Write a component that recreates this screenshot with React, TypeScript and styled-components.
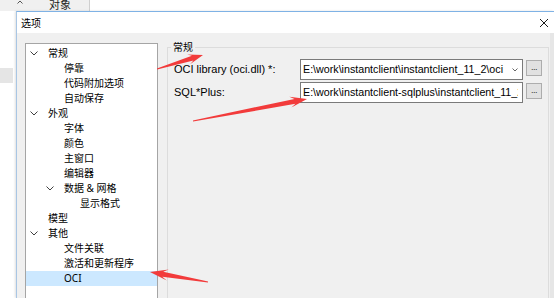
import React from 'react';
import styled, { createGlobalStyle } from 'styled-components';

const LATIN = `"Noto Sans", "Noto Sans CJK SC", sans-serif`;
const UI = `"Liberation Sans", Arial, "Noto Sans CJK SC", sans-serif`;
const CJK = `"Noto Sans CJK SC", "Noto Sans", sans-serif`;

const Global = createGlobalStyle`
  html, body { margin: 0; padding: 0; background: #fff; overflow: hidden; }
  body { font-family: ${LATIN}; color: #000; }
  * { box-sizing: border-box; }
`;

const Page = styled.div`
  position: relative;
  width: 554px;
  height: 298px;
  overflow: hidden;
  display: flex;
  flex-direction: column;
  background: #fff;
`;

const TopStrip = styled.div`
  height: 11px;
  flex: none;
  display: flex;
`;

const Tab = styled.div`
  width: 90px;
  background: #f0f0f0;
  border-right: 1px solid #cfcfcf;
  display: flex;
  align-items: flex-start;
  padding-left: 17px;
  overflow: hidden;
`;

const TabLabel = styled.span`
  font-family: ${CJK};
  font-size: 11px;
  line-height: 12px;
  margin-left: 26px;
  margin-top: -2px;
  color: #222;
`;

const Main = styled.div`
  flex: 1;
  display: flex;
  min-height: 0;
`;

const Gutter = styled.div`
  width: 16px;
  flex: none;
  display: flex;
  flex-direction: column;
`;

const GutterMark = styled.div`
  margin-top: 57px;
  width: 13px;
  height: 15px;
  background: #e5e5e5;
`;

const Dialog = styled.div`
  flex: 1;
  min-width: 0;
  display: flex;
  flex-direction: column;
  border-top: 1px solid #7fb2e5;
  border-left: 1px solid #a9c6e4;
  box-shadow: -1px 0 2px rgba(0, 0, 0, 0.12);
`;

const TitleBar = styled.div`
  height: 21px;
  flex: none;
  background: #fff;
  display: flex;
  align-items: center;
  justify-content: space-between;
  padding: 0 5px 0 4px;
`;

const Title = styled.span`
  font-family: ${CJK};
  font-size: 10px;
  line-height: 12px;
  color: #000;
`;

const Body = styled.div`
  flex: 1;
  min-height: 0;
  display: flex;
  align-items: flex-start;
  gap: 9px;
  padding: 8px 1px 0 8px;
  background: #f0f0f0;
  border-right: 4px solid #e6e6e6;
`;

const Tree = styled.div`
  width: 133px;
  height: 300px;
  flex: none;
  margin-top: 2px;
  padding-top: 2px;
  border: 1px solid #a5a5a5;
  background: #fff;
  display: flex;
  flex-direction: column;
`;

const TreeRow = styled.div<{ $level: number; $selected?: boolean }>`
  height: 15px;
  flex: none;
  display: flex;
  align-items: center;
  padding-left: ${(p) => p.$level * 16}px;
  background: ${(p) => (p.$selected ? '#cce8ff' : 'transparent')};
  font-family: ${LATIN};
  font-size: 10px;
  line-height: 15px;
  color: #000;
  white-space: nowrap;
`;

const Toggle = styled.span`
  width: 16px;
  flex: none;
  display: flex;
  justify-content: center;
  align-items: center;
`;

const TreeLabel = styled.span`
  margin-left: 6px;
`;

const GroupBox = styled.fieldset`
  flex: 1;
  min-width: 0;
  height: 270px;
  margin: 0;
  padding: 6px 6px 0 6px;
  border: 1px solid #dcdcdc;
`;

const Legend = styled.legend`
  font-family: ${CJK};
  font-size: 10px;
  line-height: 12px;
  padding: 0 2px;
  margin-left: -3px;
  color: #000;
`;

const FormGrid = styled.div`
  display: grid;
  grid-template-columns: 126px 1fr auto;
  row-gap: 2px;
  align-items: start;
`;

const Label = styled.span`
  font-family: ${UI};
  font-size: 11px;
  line-height: 21px;
  white-space: nowrap;
  color: #000;
`;

const Field = styled.div`
  height: 21px;
  border: 1px solid #7a7a7a;
  background: #fff;
  display: flex;
  align-items: center;
  padding: 0 4px 0 2px;
  overflow: hidden;
  min-width: 0;
`;

const FieldText = styled.span`
  flex: 1;
  min-width: 0;
  overflow: hidden;
  white-space: nowrap;
  text-overflow: clip;
  font-family: ${UI};
  font-size: 10.7px;
  line-height: 19px;
  color: #000;
`;

const DotsButton = styled.div`
  width: 16px;
  height: 16px;
  margin: 1px 0 0 3px;
  border: 1px solid #adadad;
  background: #e1e1e1;
  display: flex;
  align-items: flex-end;
  justify-content: center;
  font-family: ${UI};
  font-size: 9px;
  line-height: 9px;
  padding-bottom: 3px;
  color: #333;
  letter-spacing: -0.5px;
`;

const Overlay = styled.svg`
  position: absolute;
  left: 0;
  top: 0;
  pointer-events: none;
`;

type Node = { label: string; level: number; open?: boolean; selected?: boolean };

const nodes: Node[] = [
  { label: '常规', level: 0, open: true },
  { label: '停靠', level: 1 },
  { label: '代码附加选项', level: 1 },
  { label: '自动保存', level: 1 },
  { label: '外观', level: 0, open: true },
  { label: '字体', level: 1 },
  { label: '颜色', level: 1 },
  { label: '主窗口', level: 1 },
  { label: '编辑器', level: 1 },
  { label: '数据 & 网格', level: 1, open: true },
  { label: '显示格式', level: 2 },
  { label: '模型', level: 0 },
  { label: '其他', level: 0, open: true },
  { label: '文件关联', level: 1 },
  { label: '激活和更新程序', level: 1 },
  { label: 'OCI', level: 1, selected: true },
];

function arrow(x1: number, y1: number, x2: number, y2: number, hl = 16, hw = 11, nw = 5) {
  const dx = x2 - x1;
  const dy = y2 - y1;
  const len = Math.hypot(dx, dy);
  const ux = dx / len;
  const uy = dy / len;
  const nx = -uy;
  const ny = ux;
  const bx = x2 - ux * hl;
  const by = y2 - uy * hl;
  const kx = x2 - ux * hl * 0.72;
  const ky = y2 - uy * hl * 0.72;
  const pts = [
    [x1 + nx * 0.5, y1 + ny * 0.5],
    [kx + (nx * nw) / 2, ky + (ny * nw) / 2],
    [bx + (nx * hw) / 2, by + (ny * hw) / 2],
    [x2, y2],
    [bx - (nx * hw) / 2, by - (ny * hw) / 2],
    [kx - (nx * nw) / 2, ky - (ny * nw) / 2],
    [x1 - nx * 0.5, y1 - ny * 0.5],
  ];
  return pts.map((p) => `${p[0].toFixed(1)},${p[1].toFixed(1)}`).join(' ');
}

const Chevron = () => (
  <svg width="8" height="5" viewBox="0 0 8 5">
    <polyline points="0.5,0.5 4,4 7.5,0.5" fill="none" stroke="#404040" strokeWidth="1" />
  </svg>
);

export default function App() {
  return (
    <>
      <Global />
      <Page>
        <TopStrip>
          <Tab>
            <svg width="6" height="4" viewBox="0 0 6 4">
              <polyline points="0.5,3.5 3,1 5.5,3.5" fill="none" stroke="#555" strokeWidth="1" />
            </svg>
            <TabLabel>对象</TabLabel>
          </Tab>
        </TopStrip>
        <Main>
          <Gutter>
            <GutterMark />
          </Gutter>
          <Dialog>
            <TitleBar>
              <Title>选项</Title>
              <svg width="10" height="10" viewBox="0 0 10 10">
                <path d="M1 1 L9 9 M9 1 L1 9" stroke="#1a1a1a" strokeWidth="1" />
              </svg>
            </TitleBar>
            <Body>
              <Tree>
                {nodes.map((n) => (
                  <TreeRow key={n.label} $level={n.level} $selected={n.selected}>
                    <Toggle>{n.open ? <Chevron /> : null}</Toggle>
                    <TreeLabel>{n.label}</TreeLabel>
                  </TreeRow>
                ))}
              </Tree>
              <GroupBox>
                <Legend>常规</Legend>
                <FormGrid>
                  <Label>OCI library (oci.dll) *:</Label>
                  <Field>
                    <FieldText>E:\work\instantclient\instantclient_11_2\oci</FieldText>
                    <svg width="6" height="4" viewBox="0 0 6 4">
                      <polyline points="0.5,0.5 3,3 5.5,0.5" fill="none" stroke="#666" strokeWidth="1" />
                    </svg>
                  </Field>
                  <DotsButton>...</DotsButton>
                  <Label>SQL*Plus:</Label>
                  <Field>
                    <FieldText>E:\work\instantclient-sqlplus\instantclient_11_2\sqlplus.exe</FieldText>
                  </Field>
                  <DotsButton>...</DotsButton>
                </FormGrid>
              </GroupBox>
            </Body>
          </Dialog>
        </Main>
        <Overlay width="554" height="298" viewBox="0 0 554 298">
          <polygon points={arrow(157, 69, 203, 55, 15, 10, 5)} fill="#f23b3b" />
          <polygon points={arrow(193, 121, 307, 99, 17, 11, 5)} fill="#f23b3b" />
          <polygon points={arrow(208, 282, 150, 272, 18, 11, 5)} fill="#f23b3b" />
        </Overlay>
      </Page>
    </>
  );
}
